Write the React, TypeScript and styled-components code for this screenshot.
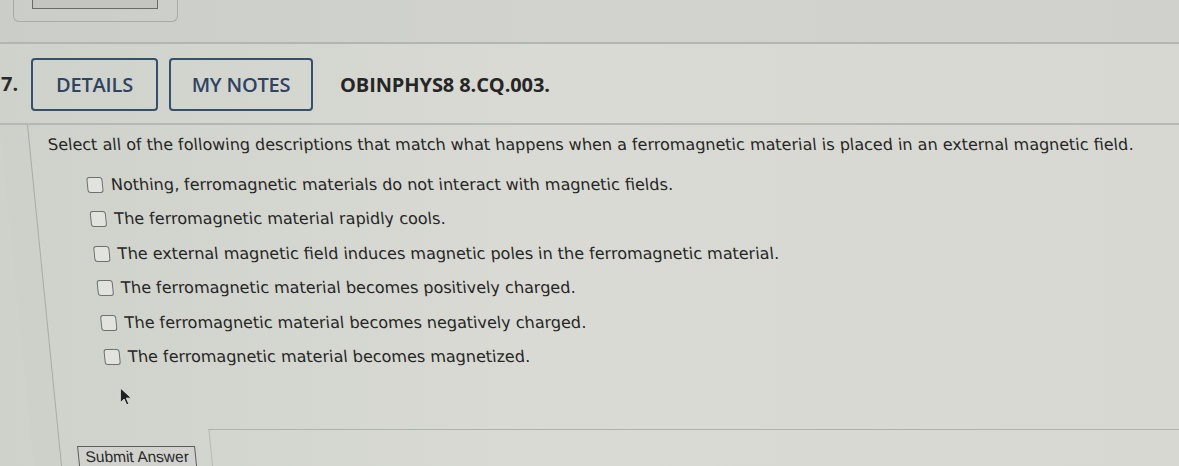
import React from "react";
import styled, { createGlobalStyle } from "styled-components";

const Global = createGlobalStyle`
  html, body { margin: 0; padding: 0; background: #d3d5cf; overflow: hidden; }
  #root { width: 1179px; height: 466px; }
`;

const Page = styled.div`
  width: 1179px;
  height: 466px;
  overflow: hidden;
  position: relative;
  display: flex;
  flex-direction: column;
  background: linear-gradient(90deg, #cfd1cb 0%, #d9dad4 45%, #d7d8d2 100%);
  font-family: "DejaVu Sans", Verdana, sans-serif;
  color: #262726;
`;

const PrevArea = styled.div`
  height: 44px;
  padding-left: 13px;
  border-bottom: 2px solid #b3b5b0;
  box-sizing: border-box;
  background: linear-gradient(90deg, #cbcdc8 0%, #d2d3ce 50%, #d0d1cc 100%);
`;

const PrevBox = styled.div`
  width: 165px;
  height: 22px;
  box-sizing: border-box;
  border: 1px solid #a9aba6;
  border-top: none;
  border-radius: 0 0 6px 6px;
  padding-left: 18px;
`;

const PrevButton = styled.div`
  width: 126px;
  height: 9px;
  box-sizing: border-box;
  background: #c4c5c1;
  border: 1.5px solid #6a6b68;
  border-top: none;
`;

const Header = styled.div`
  height: 81px;
  display: flex;
  align-items: center;
  border-bottom: 2px solid #b6b8b3;
  box-sizing: border-box;
  font-family: "Open Sans", "DejaVu Sans", sans-serif;
  padding-top: 2px;
`;

const Number = styled.div`
  width: 30px;
  padding-left: 1px;
  font-size: 20px;
  font-weight: 700;
  color: #2a2b2a;
  padding-bottom: 2px;
`;

const TabButton = styled.div<{ $w: number }>`
  width: ${(p) => p.$w}px;
  height: 53px;
  box-sizing: border-box;
  border: 2px solid #34506f;
  border-radius: 4px;
  display: flex;
  align-items: center;
  justify-content: center;
  font-size: 20px;
  font-weight: 600;
  color: #2f4462;
  margin-right: 11px;
  letter-spacing: -0.2px;
`;

const Title = styled.div`
  margin-left: 16px;
  font-size: 20px;
  font-weight: 700;
  color: #252625;
  letter-spacing: -0.1px;
`;

const Body = styled.div`
  flex: 1;
  display: flex;
  transform: skewX(5.7deg);
  transform-origin: top left;
`;

const Gutter = styled.div`
  width: 27px;
  flex: none;
  background: #ced0ca;
`;

const Content = styled.div`
  flex: 1;
  border-left: 1.5px solid #a9aba6;
  display: flex;
  flex-direction: column;
  padding: 10px 0 0 18px;
  position: relative;
`;

const Question = styled.div`
  font-size: 16px;
  line-height: 20px;
  white-space: nowrap;
`;

const Options = styled.div`
  display: flex;
  flex-direction: column;
  gap: 14.4px;
  margin-top: 20px;
  padding-left: 35px;
`;

const Option = styled.label`
  display: flex;
  align-items: center;
  gap: 8px;
  font-size: 16px;
  line-height: 20px;
  white-space: nowrap;
`;

const Box = styled.span`
  width: 16px;
  height: 16px;
  box-sizing: border-box;
  border: 1.6px solid #6f716e;
  border-radius: 3px;
  background: #e2e3de;
  flex: none;
`;

const Footer = styled.div`
  margin-top: auto;
  display: flex;
  align-items: flex-end;
  height: 36px;
`;

const SubmitButton = styled.button`
  width: 118px;
  height: 22px;
  margin-bottom: -2px;
  margin-left: -1px;
  box-sizing: border-box;
  border: 1.5px solid #5d5e5c;
  background: #d1d2ce;
  font-family: "Liberation Sans", Arial, sans-serif;
  font-size: 15.5px;
  color: #2b2b2b;
  padding: 0;
  text-align: center;
  line-height: 18px;
`;

const AnswerBox = styled.div`
  margin-left: 15px;
  flex: 1;
  height: 36px;
  border-top: 1.5px solid #b0b2ad;
  border-left: 1.5px solid #b8bab5;
`;

const Cursor = styled.svg`
  position: absolute;
  left: 64px;
  top: 262px;
  transform: skewX(-5.7deg);
`;

const options = [
  "Nothing, ferromagnetic materials do not interact with magnetic fields.",
  "The ferromagnetic material rapidly cools.",
  "The external magnetic field induces magnetic poles in the ferromagnetic material.",
  "The ferromagnetic material becomes positively charged.",
  "The ferromagnetic material becomes negatively charged.",
  "The ferromagnetic material becomes magnetized.",
];

export default function App() {
  return (
    <>
      <Global />
      <Page>
        <PrevArea>
          <PrevBox>
            <PrevButton />
          </PrevBox>
        </PrevArea>
        <Header>
          <Number>7.</Number>
          <TabButton $w={127}>DETAILS</TabButton>
          <TabButton $w={144}>MY NOTES</TabButton>
          <Title>OBINPHYS8 8.CQ.003.</Title>
        </Header>
        <Body>
          <Gutter />
          <Content>
            <Question>
              Select all of the following descriptions that match what happens when a ferromagnetic material is placed in an external magnetic field.
            </Question>
            <Options>
              {options.map((o) => (
                <Option key={o}>
                  <Box />
                  <span>{o}</span>
                </Option>
              ))}
            </Options>
            <Cursor width="15" height="21" viewBox="0 0 14 20">
              <path d="M1 1 L1 15 L4.5 11.5 L7 17 L9 16 L6.6 10.6 L11.5 10.6 Z" fill="#1e1f22" stroke="#e6e6e2" strokeWidth="0.8" />
            </Cursor>
            <Footer>
              <SubmitButton>Submit Answer</SubmitButton>
              <AnswerBox />
            </Footer>
          </Content>
        </Body>
      </Page>
    </>
  );
}
